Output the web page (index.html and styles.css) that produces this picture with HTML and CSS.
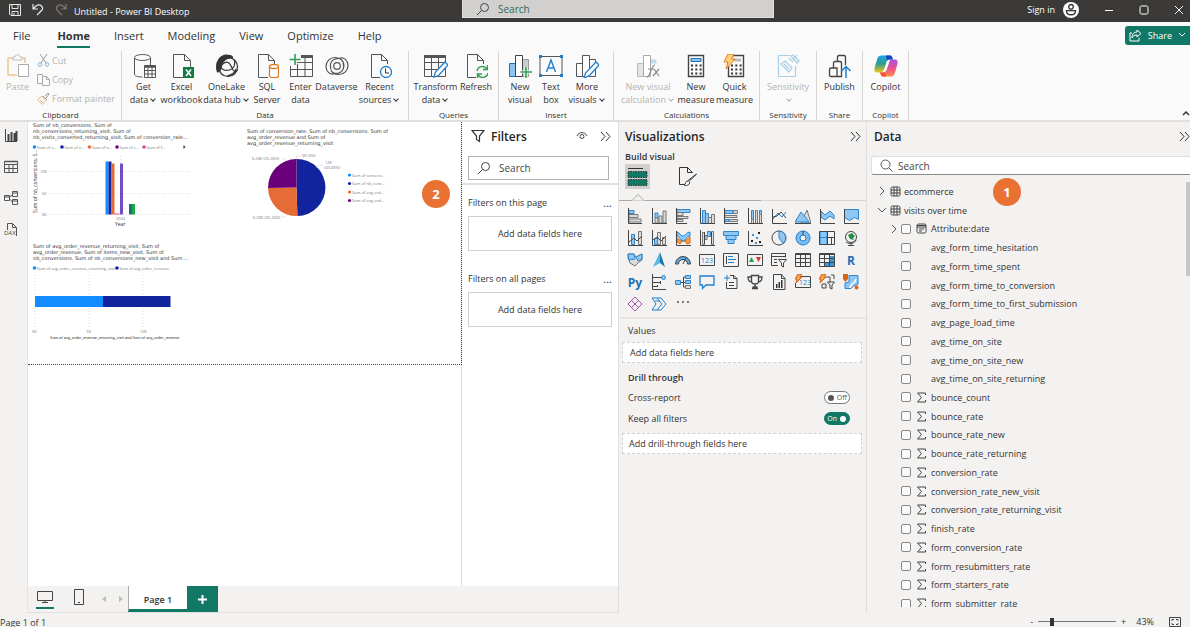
FILE: index.html
```html
<!DOCTYPE html>
<html lang="en">
<head>
    <meta charset="UTF-8">
    <meta name="viewport" content="width=device-width, initial-scale=1.0">
    <title>Untitled - Power BI Desktop</title>
    <link rel="stylesheet" href="styles.css">
</head>
<body>
    <header class="titlebar">
        <div class="titlebar-left">
            <button class="plain" aria-label="Save"><svg width="14" height="14" viewBox="0 0 14 14" fill="none" stroke="#e8e8e8"><path d="M1.5 1.5h11v11h-9.5l-1.5-1.5zM4 1.5v4h6v-4M4 12.500v-4h6v4M6 10v2"/></svg></button>
            <button class="plain" aria-label="Undo"><svg width="14" height="14" viewBox="0 0 14 14" fill="none" stroke="#e8e8e8" stroke-width="1.200"><path d="M2 1v5h5M2 6l3-3c4-3 8 1 6 4l-5 5"/></svg></button>
            <button class="plain" aria-label="Redo"><svg width="14" height="14" viewBox="0 0 14 14" fill="none" stroke="#7c7b7a" stroke-width="1.200"><path d="M12 1v5H7M12 6L9 3C5 0 1 4 3 7l5 5"/></svg></button>
            <span class="doc-name">Untitled - Power BI Desktop</span>
        </div>
        <label class="title-search">
            <svg width="14" height="14" viewBox="0 0 14 14" fill="none" stroke="#3f4a47"><circle cx="8.500" cy="5.500" r="4"/><path d="M5.500 8.500L1 13"/></svg>
            <input type="text" placeholder="Search" aria-label="Search commands">
        </label>
        <div class="titlebar-right">
            <span>Sign in</span>
            <svg width="16" height="16" viewBox="0 0 16 16" fill="none" stroke="#333"><circle cx="8" cy="8" r="8" fill="#fff" stroke="none"/><circle cx="8" cy="4.800" r="2.300" stroke-width="1.300"/><path d="M3.500 8.700h9c0 5.400-9 5.400-9 0z" stroke-width="1.300"/></svg>
            <button class="plain" aria-label="Minimize"><svg width="10" height="10" viewBox="0 0 10 10" stroke="#fff"><path d="M1 5.500h8"/></svg></button>
            <button class="plain" aria-label="Maximize"><svg width="10" height="10" viewBox="0 0 10 10" fill="none" stroke="#fff"><rect x="1" y="1" width="8" height="8" rx="1.500"/></svg></button>
            <button class="plain" aria-label="Close"><svg width="10" height="10" viewBox="0 0 10 10" stroke="#fff"><path d="M1 1l8 8M9 1l-8 8"/></svg></button>
        </div>
    </header>

    <nav class="menu">
        <a href="#">File</a>
        <a href="#" class="active">Home</a>
        <a href="#">Insert</a>
        <a href="#">Modeling</a>
        <a href="#">View</a>
        <a href="#">Optimize</a>
        <a href="#">Help</a>
        <button class="share">
            <svg width="13" height="13" viewBox="0 0 13 13" fill="none" stroke="#fff"><path d="M3 4H1v8h9V9M8 1l4 3.500L8 8V6C5 6 4 7 3 9c0-4 2-6 5-6z"/></svg>
            Share
            <svg width="8" height="6" viewBox="0 0 8 6" fill="none" stroke="#fff"><path d="M1 1l3 3 3-3"/></svg>
        </button>
    </nav>

    <section class="ribbon">
        <div class="group g-clipboard">
            <div class="tools">
                <button class="tool w31 off">
                    <svg viewBox="0 0 24 24" fill="none"><path d="M7 4H2v17h9" stroke="#f0c58e" stroke-width="1.500"/><path d="M16 4h3v5" stroke="#f0c58e" stroke-width="1.500"/><path d="M7 3h2c0-3 5-3 5 0h2v3H7z" stroke="#bbb"/><path d="M12.500 10.500h10v12h-10z" fill="#fff" stroke="#aaa"/></svg>
                    <span>Paste</span>
                </button>
                <div class="stack">
                    <button class="small off"><svg width="13" height="13" viewBox="0 0 13 13" fill="none"><path d="M3 0l6 9M10 0L4 9" stroke="#999"/><circle cx="3" cy="10.500" r="1.800" stroke="#7fb6dd"/><circle cx="10" cy="10.500" r="1.800" stroke="#7fb6dd"/></svg>Cut</button>
                    <button class="small off"><svg width="13" height="13" viewBox="0 0 13 13" fill="none" stroke="#aaa"><path d="M5 10.500H.5v-9h5V3M5.500 3.500h4l3 3v6h-7zM9.500 3.500v3h3"/></svg>Copy</button>
                    <button class="small off"><svg width="13" height="13" viewBox="0 0 13 13" fill="none"><path d="M6 4l4 4M8 4l3-3 1 1-3 4" stroke="#999"/><path d="M5 4L.5 7.500l5 5L9 8.500z" stroke="#e9b98a"/><path d="M3 8l3 3" stroke="#e9b98a"/></svg>Format painter</button>
                </div>
            </div>
            <div class="group-name">Clipboard</div>
        </div>
        <div class="group g-data">
            <div class="tools">
                <button class="tool w31">
                    <svg viewBox="0 0 24 24" fill="none" stroke="#555"><path d="M2.500 4v16c0 2 3 3 8 3M18.500 4v7"/><ellipse cx="10.500" cy="3.500" rx="8" ry="3"/><path d="M12.500 11.500h11v12h-11z" fill="#fff"/><path d="M12.500 12.500h11" stroke-width="2.500"/><path d="M12.500 16.500h11M12.500 20h11M16 12v11M20 12v11"/></svg>
                    <span>Get<br>data<i class="chev"></i></span>
                </button>
                <button class="tool w45">
                    <svg viewBox="0 0 24 24" fill="none" stroke="#555"><path d="M13 23.500H3.500V.5h11l6 6V13M14.500.5v6h6"/><path d="M13 13h11v11H13z" fill="#107c41" stroke="none"/><path d="M16 15.500l5 6.500M21 15.500L16 22" stroke="#fff" stroke-width="1.600"/></svg>
                    <span>Excel<br>workbook</span>
                </button>
                <button class="tool w45">
                    <svg viewBox="0 0 24 24" fill="none" stroke="#333" stroke-width="1.200"><circle cx="13" cy="13" r="9.500"/><path d="M2.500 18C-.5 9 5-1 15 1.500c2 .5 3 1.500 2 2.500-5-1-10 3-10.500 8-.4 3-2 6-4 6z" fill="#333"/><path d="M6.500 11c5-5 8-3 10 2s4 6 6 3M19.500 6c1 5-1 9-5 10-4 1-7 0-9-3M12 22c5-1 8-3 9-7"/></svg>
                    <span>OneLake<br>data hub<i class="chev"></i></span>
                </button>
                <button class="tool w36">
                    <svg viewBox="0 0 24 24" fill="none"><path d="M13 23.500H3.500V.5h10l6 6V10M13.500.5v6h6" stroke="#555"/><path d="M14.500 12.500v9c0 3 9 3 9 0v-9" fill="#fff" stroke="#e07a1f" stroke-width="1.300"/><ellipse cx="19" cy="12.500" rx="4.500" ry="2" fill="#fff" stroke="#e07a1f" stroke-width="1.300"/></svg>
                    <span>SQL<br>Server</span>
                </button>
                <button class="tool w31">
                    <svg viewBox="0 0 24 24" fill="none" stroke="#555"><path d="M12 1.500h11.500v21h-22V12M1.500 15.500h22M8 8.500h15.500M8.500 10v12.500M16 4v18.500"/><path d="M12 2.500h11.500" stroke-width="3"/><path d="M6 0v11M.5 5.500h11" stroke="#2f9e4f" stroke-width="1.600"/></svg>
                    <span>Enter<br>data</span>
                </button>
                <button class="tool w41">
                    <svg viewBox="0 0 24 24" fill="none" stroke="#555" stroke-width="1.200"><circle cx="12" cy="12" r="3.300"/><path d="M10 19.500c-5 2-9-2-9-7 0-5 4-9 9-9 6 0 9 4 9 8 0 5-4 8-8 8-3 0-5-2-5-4M14 4.500c5-2 9 2 9 7 0 5-4 9-9 9-3 0-5-1-6-2M6 15c-2-6 1-10.500 8-10.500M18 9c2 6-1 10.500-8 10.500"/></svg>
                    <span>Dataverse</span>
                </button>
                <button class="tool w45">
                    <svg viewBox="0 0 24 24" fill="none"><path d="M12 23.500H3.500V.5h10l6 6V10M13.500.5v6h6" stroke="#555"/><circle cx="18" cy="18" r="5.500" fill="#fff" stroke="#1f7fd1" stroke-width="1.300"/><path d="M17.500 14.500V19H21" stroke="#333"/></svg>
                    <span>Recent<br>sources<i class="chev"></i></span>
                </button>
            </div>
            <div class="group-name">Data</div>
        </div>
        <div class="group g-queries">
            <div class="tools">
                <button class="tool w45">
                    <svg viewBox="0 0 24 24" fill="none" stroke="#555"><path d="M.5 1.500h21v21H.5zM.5 8.500h21M.5 15.500h21M7.500 4v18M14.500 4v18"/><path d="M.5 2.500h21" stroke-width="3"/><path d="M10 23l1.500-5L21 8l3 3-9.500 10.500z" fill="#fff" stroke="#1f7fd1" stroke-width="1.300"/></svg>
                    <span>Transform<br>data<i class="chev"></i></span>
                </button>
                <button class="tool w36">
                    <svg viewBox="0 0 24 24" fill="none"><path d="M12 23.500H3.500V.5h10l6 6V10M13.500.5v6h6" stroke="#555"/><path d="M13 17c1-5 7-6 10-2M23.500 11v4.500H19M24 19c-1 5-7 6-10 2M13.500 24v-4H18" stroke="#2f9e4f" stroke-width="1.400"/></svg>
                    <span>Refresh</span>
                </button>
            </div>
            <div class="group-name">Queries</div>
        </div>
        <div class="group g-insert">
            <div class="tools">
                <button class="tool w31">
                    <svg viewBox="0 0 24 24" fill="none"><path d="M1.500 9.500h6v13h-6z" fill="#8ec4ee" stroke="#1f6fb5"/><path d="M14.500 5.500h6v17h-6z" fill="#ccc" stroke="#999"/><path d="M7.500 1.500h7v21h-7z" fill="#fff" stroke="#444"/><path d="M18 12v12M12 18h12" stroke="#fafafa" stroke-width="3"/><path d="M18 12.500V24M12.500 18H24" stroke="#2f9e4f" stroke-width="1.600"/></svg>
                    <span>New<br>visual</span>
                </button>
                <button class="tool w31">
                    <svg viewBox="0 0 24 24" fill="none"><path d="M1 2.500h22v19H1z" stroke="#555"/><path d="M7.500 18L12 6l4.500 12M9 14h6" stroke="#1f7fd1" stroke-width="1.400"/><path d="M0 1h3v3H0zM21 1h3v3h-3zM0 20h3v3H0zM21 20h3v3h-3z" fill="#1f7fd1"/></svg>
                    <span>Text<br>box</span>
                </button>
                <button class="tool w41">
                    <svg viewBox="0 0 24 24" fill="none" stroke="#555"><path d="M1.500 9.500h6v13h-6zM14.500 5.500h6v17h-6z"/><path d="M7.500 1.500h7v21h-7z" fill="#fff"/><path d="M9 24l1.500-5L21 8l3 3-9.500 10.500z" fill="#fff" stroke="#1f7fd1" stroke-width="1.300"/></svg>
                    <span>More<br>visuals<i class="chev"></i></span>
                </button>
            </div>
            <div class="group-name">Insert</div>
        </div>
        <div class="group g-calc">
            <div class="tools">
                <button class="tool w60 off">
                    <svg viewBox="0 0 24 24" fill="none"><path d="M1.500 9.500h6v13h-6z" fill="#e4e4e4" stroke="#bbb"/><path d="M14.500 5.500h6v4h-6z" fill="#bcdcf3"/><path d="M7.500 1.500h7v21h-7z" fill="#fff" stroke="#aaa"/><path d="M11 23c3 1 4-12 8-12M12 15h6M18 15l5 7M23 15l-6 7" stroke="#888" stroke-width="1.200"/></svg>
                    <span>New visual<br>calculation<i class="chev"></i></span>
                </button>
                <button class="tool w36">
                    <svg viewBox="0 0 24 24" fill="none"><path d="M4.500 1.500h15v21h-15z" stroke="#444" stroke-width="1.400"/><path d="M7 4.500h10v3H7z" fill="#8ec4ee" stroke="#1f6fb5"/><path d="M7 11.500h11M7 15.500h11M7 19.500h11" stroke="#333" stroke-width="2" stroke-dasharray="2 2.300"/></svg>
                    <span>New<br>measure</span>
                </button>
                <button class="tool w41">
                    <svg viewBox="0 0 24 24" fill="none"><path d="M5.500 1.500h15v21h-15z" stroke="#444" stroke-width="1.400"/><path d="M11 4.500h7v3h-7z" fill="#bbb"/><path d="M8 11.500h11M8 15.500h11M8 19.500h11" stroke="#333" stroke-width="2" stroke-dasharray="2 2.300"/><path d="M5 0h6L8.500 5H12L3 15l2-7H1z" fill="#ffd37a" stroke="#e07a1f"/></svg>
                    <span>Quick<br>measure</span>
                </button>
            </div>
            <div class="group-name">Calculations</div>
        </div>
        <div class="group g-sens">
            <div class="tools">
                <button class="tool w41 off">
                    <svg viewBox="0 0 24 24" fill="none" stroke="#a9cfe8" stroke-width="1.200"><path d="M14 1.500H2.500v21h17V12M5 10l4-3 7 7-3 4zM8 10l5 5M13 4l4 4M15 2l2-1 6 6-2 2zM17 6l4-5"/></svg>
                    <span>Sensitivity<br><i class="chev"></i></span>
                </button>
            </div>
            <div class="group-name">Sensitivity</div>
        </div>
        <div class="group g-one">
            <div class="tools">
                <button class="tool w36">
                    <svg viewBox="0 0 24 24" fill="none" stroke="#444" stroke-width="1.300"><path d="M3 14h6v8.500H3q-1.500 0-1.500-1.500v-5.500Q1.500 14 3 14zM5.500 14V9q0-1.500 1.500-1.500h5q1.500 0 1.500 1.500v13.500H9M9.500 7.500V3q0-1.500 1.500-1.500h5q1.500 0 1.500 1.500v8"/><path d="M18 24V12.500M13.500 17l4.500-4.500 4.500 4.500" stroke="#1f7fd1" stroke-width="1.500"/></svg>
                    <span>Publish</span>
                </button>
            </div>
            <div class="group-name">Share</div>
        </div>
        <div class="group g-one">
            <div class="tools">
                <button class="tool w36">
                    <svg viewBox="0 0 24 24">
                        <defs>
                            <linearGradient id="cpA" x1="0" y1="0" x2="0" y2="1"><stop offset="0" stop-color="#1ba4f0"/><stop offset=".5" stop-color="#2f9e8a"/><stop offset="1" stop-color="#f2c811"/></linearGradient>
                            <linearGradient id="cpB" x1="0" y1="0" x2="0" y2="1"><stop offset="0" stop-color="#a64de8"/><stop offset=".5" stop-color="#e8518f"/><stop offset="1" stop-color="#ff8a4c"/></linearGradient>
                        </defs>
                        <path d="M7 1.500h9c2 0 2 2 3 4h-4c-2 0-2 1-3 4l-2 6c-1 2-2 3-4 3H3c-3 0-3-3-2-6l2-7c1-3 2-4 4-4z" fill="url(#cpA)"/>
                        <path d="M12 1.500h4c2 0 2 2 3 4h-4l-2 1z" fill="#1a3fc4"/>
                        <path d="M17 22.500H9c-2 0-2-2-3-4h3c2 0 3-1 4-4l2-6c1-2 1-3 3-3h3c3 0 3 3 2 6l-2 7c-1 3-2 4-4 4z" fill="url(#cpB)"/>
                        <path d="M12 22.500H9c-2 0-2-2-3-4h5z" fill="#f5532d"/>
                        <path d="M13 8.500h2l-3 8h-2z" fill="#fafafa"/>
                    </svg>
                    <span>Copilot</span>
                </button>
            </div>
            <div class="group-name">Copilot</div>
        </div>
        <button class="plain collapse" aria-label="Collapse ribbon"><svg width="8" height="6" viewBox="0 0 8 6" fill="none" stroke="#333" stroke-width="1.500"><path d="M1 5l3-3 3 3"/></svg></button>
    </section>

    <main class="workspace">
        <nav class="rail">
            <button class="plain" aria-label="Report view"><svg width="14" height="14" viewBox="0 0 14 14" fill="none" stroke="#444"><path d="M1.500 0v12.500H13"/><path d="M4.500 5v7M7.500 3v9M10.500 4v8M12.500 2v10" stroke-width="2"/></svg></button>
            <button class="plain" aria-label="Table view"><svg width="14" height="14" viewBox="0 0 14 14" fill="none" stroke="#555"><path d="M.5 1.500h13v11H.5zM.5 4.500h13M.5 8.500h13M5 4v8.500M9 4v8.500"/><path d="M.5 1.500h13" stroke-width="1.500"/></svg></button>
            <button class="plain" aria-label="Model view"><svg width="14" height="14" viewBox="0 0 14 14" fill="none" stroke="#555"><path d="M.5 4.500h5v5h-5zM.5 6h5M8.500.5h5v5h-5zM8.500 2h5M8.500 8.500h5v5h-5zM8.500 10h5M5.500 6L8.500 4M5.500 8l3 3"/></svg></button>
            <button class="plain" aria-label="DAX query view"><svg width="16" height="16" viewBox="0 0 16 16" fill="none" stroke="#555"><path d="M3.500 8V1.500h5l4 4V14M8.500 1.500v4h4"/><text x="0" y="13" font-size="6" fill="#444" stroke="none">DAX</text></svg></button>
        </nav>

        <div class="center">
            <div class="editor">
                <div class="canvas">
                    <div class="report-page">
                        <div class="visual">
                            <h4>Sum of nb_conversions, Sum of<br>nb_conversions_returning_visit, Sum of<br>nb_visits_converted_returning_visit, Sum of conversion_rate...</h4>
                            <svg width="160" height="88" viewBox="32 142 160 88" class="plot">
                                <circle cx="34.500" cy="147" r="1.800" fill="#118dff"/><text x="37" y="148.500">Sum of e...</text>
                                <circle cx="62" cy="147" r="1.800" fill="#12239e"/><text x="64.500" y="148.500">Sum of n...</text>
                                <circle cx="89.500" cy="147" r="1.800" fill="#e66c37"/><text x="92" y="148.500">Sum of n...</text>
                                <circle cx="117" cy="147" r="1.800" fill="#6b007b"/><text x="119.500" y="148.500">Sum of c...</text>
                                <circle cx="144" cy="147" r="1.800" fill="#e044a7"/><text x="146.500" y="148.500">Sum of f...</text>
                                <path d="M183.500 145l2 2-2 2z" fill="#333"/>
                                <path d="M48 171.500h142M48 193.500h142M48 214.500h142M120.500 156v58" class="gridline"/>
                                <text x="40" y="173">10K</text><text x="42" y="195">5K</text><text x="42" y="216">0K</text>
                                <text transform="translate(37 213) rotate(-90)" class="side">Sum of nb_conversions, S...</text>
                                <path d="M105.500 161.500h3v53h-3z" fill="#118dff"/>
                                <path d="M108.500 161.500h3v53h-3z" fill="#12239e"/>
                                <path d="M111.500 163.500h3v51h-3z" fill="#e66c37"/>
                                <path d="M114.500 213.500h5v1h-5z" fill="#e044a7"/>
                                <path d="M120 163.500h3v51h-3z" fill="#744ec2"/>
                                <path d="M129 204h3v10.500h-3z" fill="#197278"/>
                                <path d="M132 204h3v10.500h-3z" fill="#1aab40"/>
                                <text x="116" y="220">2024</text>
                                <text x="115" y="226" class="side">Year</text>
                            </svg>
                        </div>
                        <div class="visual second">
                            <h4>Sum of conversion_rate, Sum of nb_conversions, Sum of<br>avg_order_revenue and Sum of<br>avg_order_revenue_returning_visit</h4>
                            <svg width="160" height="74" viewBox="246 148 160 74" class="plot">
                                <path d="M296.500 187.500V159a28.500 28.500 0 0 1 .9 57z" fill="#12239e"/>
                                <path d="M296.500 187.500l.9 28.500A28.500 28.500 0 0 1 268 188z" fill="#e66c37"/>
                                <path d="M296.500 187.500l-28.500.5a28.500 28.500 0 0 1 28.500-29z" fill="#6b007b"/>
                                <path d="M296.500 159v-3h4M281 158l4 1 2 2M316 168l3-3h4M281 217h4l2-2" fill="none" stroke="#ccc" stroke-width=".5"/>
                                <text x="252" y="160">6.28K (25.26%)</text><text x="302" y="157">0K (0%)</text>
                                <text x="325" y="164">12K</text><text x="324" y="169">(49.49%)</text><text x="253" y="219">6.28K (25.24%)</text>
                                <circle cx="349.500" cy="175" r="1.600" fill="#118dff"/><text x="352" y="176.500">Sum of conversi...</text>
                                <circle cx="349.500" cy="183.500" r="1.600" fill="#12239e"/><text x="352" y="185">Sum of nb_conv...</text>
                                <circle cx="349.500" cy="192" r="1.600" fill="#e66c37"/><text x="352" y="193.500">Sum of avg_ord...</text>
                                <circle cx="349.500" cy="200.500" r="1.600" fill="#6b007b"/><text x="352" y="202">Sum of avg_ord...</text>
                            </svg>
                        </div>
                        <div class="visual">
                            <h4>Sum of avg_order_revenue_returning_visit, Sum of<br>avg_order_revenue, Sum of items_new_visit, Sum of<br>nb_conversions, Sum of nb_conversions_new_visit and Sum ...</h4>
                            <svg width="160" height="78" viewBox="32 263 160 78" class="plot">
                                <circle cx="34.500" cy="268" r="1.800" fill="#118dff"/><text x="37" y="269.500">Sum of avg_order_revenue_returning_visit</text>
                                <circle cx="117" cy="268" r="1.800" fill="#12239e"/><text x="119.500" y="269.500">Sum of avg_order_revenue</text>
                                <path d="M35 275v54M89 275v54M143 275v54" class="gridline"/>
                                <path d="M35 296h68v11H35z" fill="#118dff"/>
                                <path d="M103 296h67.500v11H103z" fill="#12239e"/>
                                <text x="32" y="333">0K</text><text x="86.500" y="333">5K</text><text x="140" y="333">10K</text>
                                <text x="50" y="339" class="axis">Sum of avg_order_revenue_returning_visit and Sum of avg_order_revenue</text>
                            </svg>
                        </div>
                    </div>
                    <span class="badge badge-two">2</span>
                </div>

                <aside class="filters">
                    <div class="pane-head">
                        <svg width="14" height="14" viewBox="0 0 14 14" fill="none" stroke="#333" stroke-width="1.200"><path d="M1 1.500h12L8.500 7v5.500l-3-2V7z"/></svg>
                        <h2>Filters</h2>
                        <svg width="12" height="10" viewBox="0 0 12 10" fill="none" stroke="#444"><path d="M1 5c2-4.500 8-4.500 10 0"/><circle cx="6" cy="5.500" r="2"/></svg>
                        <button class="plain" aria-label="Collapse filters"><svg width="11" height="11" viewBox="0 0 11 11" fill="none" stroke="#333"><path d="M1 1l4 4.500L1 10M6 1l4 4.500L6 10"/></svg></button>
                    </div>
                    <label class="filter-search">
                        <svg width="14" height="14" viewBox="0 0 14 14" fill="none" stroke="#444"><circle cx="8.500" cy="5.500" r="4"/><path d="M5.500 8.500L1 13"/></svg>
                        <input type="text" placeholder="Search" aria-label="Search filters">
                    </label>
                    <div class="filter-section">
                        <div class="filter-label"><span>Filters on this page</span><button class="plain dots" aria-label="More options">...</button></div>
                        <div class="drop-box">Add data fields here</div>
                    </div>
                    <div class="filter-section">
                        <div class="filter-label"><span>Filters on all pages</span><button class="plain dots" aria-label="More options">...</button></div>
                        <div class="drop-box">Add data fields here</div>
                    </div>
                </aside>
            </div>

            <div class="page-tabs">
                <button class="plain layout active" aria-label="Desktop layout"><svg width="16" height="14" viewBox="0 0 16 14" fill="none" stroke="#444"><path d="M.5 1.500h15v9H.5zM5 12.500h6M8 10v3"/></svg></button>
                <button class="plain layout" aria-label="Mobile layout"><svg width="12" height="16" viewBox="0 0 12 16" fill="none" stroke="#444"><path d="M1.500.5h9v15h-9zM5 13.500h2"/></svg></button>
                <button class="plain arrow" aria-label="Previous page"><svg width="6" height="6" viewBox="0 0 6 6"><path d="M5 0v6L1 3z" fill="#bbb"/></svg></button>
                <button class="plain arrow" aria-label="Next page"><svg width="6" height="6" viewBox="0 0 6 6"><path d="M1 0v6l4-3z" fill="#bbb"/></svg></button>
                <button class="page-tab">Page 1</button>
                <button class="add-page" aria-label="New page"><svg width="9" height="9" viewBox="0 0 9 9" stroke="#fff" stroke-width="2"><path d="M4.500 0v9M0 4.500h9"/></svg></button>
            </div>
        </div>

        <aside class="viz">
            <div class="pane-head">
                <h2>Visualizations</h2>
                <button class="plain" aria-label="Collapse visualizations"><svg width="11" height="11" viewBox="0 0 11 11" fill="none" stroke="#333"><path d="M1 1l4 4.500L1 10M6 1l4 4.500L6 10"/></svg></button>
            </div>
            <h3>Build visual</h3>
            <div class="build-tabs">
                <button class="selected" aria-label="Build visual"><svg width="21" height="21" viewBox="0 0 21 21"><path d="M1 2.500h15" stroke="#333"/><path d="M1 5.500h19v6H1zM1 13.500h19v6H1z" fill="#117865" stroke="#333" stroke-dasharray="1.500 1"/></svg></button>
                <button aria-label="Format visual"><svg width="21" height="21" viewBox="0 0 21 21" fill="none" stroke="#333"><path d="M8 18.500H2.500v-17h8l5 5M10.500 1.500v5h5"/><path d="M19.500 8L12 15.500l-1-1L19.500 8zM11 15c-3 0-2 3-4 4 3 1 6 0 5.500-3" fill="#fff"/></svg></button>
            </div>
            <div class="tab-line"><svg width="142" height="8" viewBox="0 0 142 8" fill="none" stroke="#aaa"><path d="M0 6.500h13l6-6 6 6h117"/></svg></div>

            <div class="viz-grid">
                <button aria-label="Stacked bar chart"><svg viewBox="0 0 16 16"><path class="b" d="M2 2.500h5v3H2z"/><path class="g" d="M2 6.500h9v3H2zM2 11h12v3H2z"/><path class="k" d="M1.500 0v15.500H15"/></svg></button>
                <button aria-label="Stacked column chart"><svg viewBox="0 0 16 16"><path class="b" d="M4 5h3v5H4z"/><path class="g" d="M4 10h3v5H4zM8 8h3v7H8zM12 3h3v12h-3z"/><path class="k" d="M1.500 0v15.500H16"/></svg></button>
                <button aria-label="Clustered bar chart"><svg viewBox="0 0 16 16"><path class="b" d="M2 1.500h13v3H2z"/><path class="g" d="M2 4.500h6v3H2zM2 8.500h11v2H2zM2 11.500h6v2H2z"/><path class="k" d="M1.500 0v15.500H12"/></svg></button>
                <button aria-label="Clustered column chart"><svg viewBox="0 0 16 16"><path class="b" d="M3.500 2.500h3v13h-3zM6.500 5.500h3v10h-3z"/><path class="g" d="M9.500 9.500h3v6h-3zM12.500 6.500h3v9h-3z"/><path class="k" d="M1.500 0v15.500H16"/></svg></button>
                <button aria-label="100% stacked bar chart"><svg viewBox="0 0 16 16"><path class="b" d="M2 2.500h8v3H2zM2 11.500h4v2H2z"/><path class="g" d="M10.500 2.500h4v3h-4zM2 7.500h12v2H2zM6.500 11.500h8v2h-8z"/><path class="k" d="M1.500 0v15.500H15"/></svg></button>
                <button aria-label="100% stacked column chart"><svg viewBox="0 0 16 16"><path class="b" d="M4.500 2.500h2v9h-2zM12.500 2.500h2v4h-2z"/><path class="g" d="M4.500 11.500h2v4h-2zM8.500 2.500h2v13h-2zM12.500 6.500h2v9h-2z"/><path class="k" d="M1.500 0v15.500H16"/></svg></button>
                <button aria-label="Line chart"><svg viewBox="0 0 16 16"><path class="bl" d="M2 11l5-6 4 4 4-5"/><path class="k" d="M1.500 1v14.500H16M2 9l4-1 4-4 5 6"/></svg></button>
                <button aria-label="Area chart"><svg viewBox="0 0 16 16"><path class="g" d="M6 15l6-13 4 13z"/><path class="b" d="M0 14L6 4l5 6 3 4z"/><path class="k" d="M0 15.500h16"/></svg></button>
                <button aria-label="Stacked area chart"><svg viewBox="0 0 16 16"><path class="b" d="M2 3l4 4 5-4 4 4v4l-4-3-5 4-4-3z"/><path class="k" d="M1.500 1v14.500H16"/></svg></button>
                <button aria-label="100% stacked area chart"><svg viewBox="0 0 16 16"><path class="b" d="M1.500 1.500h14v10l-4-2-5 3-5-3z"/><path class="k" d="M1.500 1v14.500H16"/></svg></button>

                <button aria-label="Line and stacked column chart"><svg viewBox="0 0 16 16"><path class="b" d="M4.500 4.500h3v10h-3z"/><path class="g" d="M11.500 1.500h3v13h-3z"/><path class="k" d="M1.500 0v15.500H16M2 12l5-4 3 3 5-5"/></svg></button>
                <button aria-label="Line and clustered column chart"><svg viewBox="0 0 16 16"><path class="b" d="M3.500 8.500h3v6h-3z"/><path class="g" d="M6.500 2.500h3v12h-3zM11.500 7.500h3v7h-3z"/><path class="k" d="M1.500 0v15.500H16M2 10l4-3 4 4 5-5"/></svg></button>
                <button aria-label="Ribbon chart"><svg viewBox="0 0 16 16"><path class="o" d="M2 8l4 3h4l5-4v6l-3 1-2-3H7l-2 3-3-2z"/><path class="b" d="M2 2c3 0 3 4 6 4s3-4 7-4v4c-4 0-4 5-7 5s-3-5-6-5z"/><path class="k" d="M1.500 1v14.500H16"/></svg></button>
                <button aria-label="Waterfall chart"><svg viewBox="0 0 16 16"><path class="b" d="M8.500 1.500h3v5h-3z"/><path class="g" d="M3.500 2.500h2v12h-2zM12.500 1.500h2v13h-2zM6 5.500h2v4H6z"/><path class="k" d="M1.500 0v15.500H16M5.500 2v12M12.500 2v12"/></svg></button>
                <button aria-label="Funnel chart"><svg viewBox="0 0 16 16"><path class="b" d="M.5 1.500h15v4H.5zM3 5.500h10v4H3zM5 9.500h6v4H5z"/></svg></button>
                <button aria-label="Scatter chart"><svg viewBox="0 0 16 16"><path class="k" d="M1.500 1v14.500H16"/><path d="M4 10h2v2H4zM11 2h2v2h-2zM12 11h2v2h-2z" fill="#222"/><path d="M5 4h2v2H5zM9 7h2v2H9zM8 12h2v2H8z" fill="#3a96dd"/></svg></button>
                <button aria-label="Pie chart"><svg viewBox="0 0 16 16"><circle cx="8" cy="8" r="7" class="k"/><path class="b" d="M8 1a7 7 0 0 1 4 12.500L8 8z"/></svg></button>
                <button aria-label="Donut chart"><svg viewBox="0 0 16 16"><circle cx="8" cy="8" r="5" fill="none" stroke="#7dbcf0" stroke-width="4"/><circle cx="8" cy="8" r="7" class="bl"/><circle cx="8" cy="8" r="3" class="bl"/><path class="k" d="M8 1v4"/></svg></button>
                <button aria-label="Treemap"><svg viewBox="0 0 16 16"><path class="b" d="M1 1.500h7v6H1zM1 7.500h7v7H1z"/><path class="k" d="M.5 1.500h15v13H.5zM8.500 1.500v13M8.500 7.500h7M12.500 7.500v7"/></svg></button>
                <button aria-label="Map"><svg viewBox="0 0 16 16"><circle cx="8" cy="7" r="5.500" class="k"/><path d="M5 5l4-2 3 3-2 2 1 2-4-1z" fill="#2a8c4a"/><path class="k" d="M3 12c4 3 9 1 10-2M8 13v2M5 15.500h6"/></svg></button>

                <button aria-label="Filled map"><svg viewBox="0 0 16 16"><path class="g" d="M1 2h6l2 3 6-3v6l-3 2-4 4-5-3-2-5z"/><path class="b" d="M1 2h6l1 5-6 1zM9 5l6-3v5l-4 2z"/></svg></button>
                <button aria-label="Azure map"><svg viewBox="0 0 16 16"><path d="M9 0L2 15l7-4z" fill="#5db5e0"/><path d="M9 0l5 15-5-4z" fill="#1a76ae"/></svg></button>
                <button aria-label="Gauge"><svg viewBox="0 0 16 16"><path d="M2 12a6 6 0 0 1 12 0" fill="none" stroke="#5aa9e6" stroke-width="3"/><path class="k" d="M.5 12a7.500 7.500 0 0 1 15 0h-3a4.500 4.500 0 0 0-9 0zM8 12l3-6"/></svg></button>
                <button aria-label="Card"><svg viewBox="0 0 16 16"><path class="k" d="M.5 2.500h15v11H.5z"/><text x="2" y="10.500" font-size="7" fill="#1f7fd1">123</text></svg></button>
                <button aria-label="Multi-row card"><svg viewBox="0 0 16 16"><path class="k" d="M.5 1.500h15v13H.5zM3.500 4v8"/><path class="bl" d="M5 4.500h5M5 7.500h8M5 10.500h6"/></svg></button>
                <button aria-label="KPI"><svg viewBox="0 0 16 16"><path class="k" d="M.5 2.500h15v11H.5z"/><path d="M2 10l2.500-5L7 10z" fill="#2a9d4a"/><path d="M9 5h5l-2.500 5z" fill="#d13438"/></svg></button>
                <button aria-label="Slicer"><svg viewBox="0 0 16 16"><path class="k" d="M7 13.500H.5v-12h14v4M.5 4.500h14M3 7.500h3M3 10.500h3"/><path class="k" d="M7.500 7.500h8l-3 3.500v4l-2-1v-3z"/></svg></button>
                <button aria-label="Table"><svg viewBox="0 0 16 16"><path class="k" d="M.5 1.500h15v13H.5zM.5 2.500h15M.5 6.500h15M.5 10.500h15M5.500 3v11M10.500 3v11"/></svg></button>
                <button aria-label="Matrix"><svg viewBox="0 0 16 16"><path d="M10 4h5v10h-9v-4h4z" fill="#3a96dd"/><path class="k" d="M.5 1.500h15v13H.5zM.5 2.500h15M.5 6.500h15M.5 10.500h15M5.500 3v11M10.500 3v11"/></svg></button>
                <button aria-label="R script visual"><span class="lang">R</span></button>

                <button aria-label="Python visual"><span class="lang">Py</span></button>
                <button aria-label="Key influencers"><svg viewBox="0 0 16 16"><path class="k" d="M1.500 0v15.500H15M2 3.500h9M2 8.500h7M2 12.500h4M9.500 7v3M6.500 11v2"/><circle cx="12.500" cy="3.500" r="2" class="b"/></svg></button>
                <button aria-label="Decomposition tree"><svg viewBox="0 0 16 16"><path class="k" d="M5 8.500h6M8.500 3v10h3M8.500 3h3"/><path class="b" d="M.5 6.500h5v4h-5zM10.500 1.500h5v3h-5zM10.500 6.500h5v3h-5z"/><path class="g" d="M10.500 11.500h5v3h-5z"/></svg></button>
                <button aria-label="Q&amp;A"><svg viewBox="0 0 16 16"><path class="bl" d="M1 2h14v9H7l-3.500 3.500V11H1z" stroke-width="1.300"/></svg></button>
                <button aria-label="Narrative"><svg viewBox="0 0 16 16"><path class="k" d="M7 1.500h4l3 3v10H3.500V8M10.500 1.500v3H14M6 8.500h5M6 11.500h5"/><path class="bl" d="M4 1v6M1 4h6"/></svg></button>
                <button aria-label="Goals"><svg viewBox="0 0 16 16"><path class="k" d="M4.500 1.500h7V7c0 4-7 4-7 0zM4.500 3H1c0 4 2 5 4 5M11.500 3H15c0 4-2 5-4 5M8 10v3M5 14.500h6M5.500 13h5" stroke-width="1.300"/></svg></button>
                <button aria-label="Paginated report"><svg viewBox="0 0 16 16"><path class="k" d="M2.500.5h8l3.500 4v11H2.500zM10.500.5v4h3.500"/><path d="M5 10h1.500v4H5zM7.500 8H9v6H7.500zM10 6h1.500v8H10z" fill="#333"/></svg></button>
                <button aria-label="New card"><svg viewBox="0 0 16 16"><path class="k" d="M6 2.500h9.500v11H.5V9"/><text x="4" y="11" font-size="7" fill="#1f7fd1">123</text><path class="o" d="M3 0h4L5 3h2L1 9l1-4H0z"/></svg></button>
                <button aria-label="New slicer"><svg viewBox="0 0 16 16"><path class="k" d="M7 3h4v5M12 1h3v4M3 10h4v4H3zM8.500 8h7l-2.500 3v4l-2-1v-3z"/><path class="o" d="M3 0h4L5 3h2L1 9l1-4H0z"/></svg></button>
                <button aria-label="ArcGIS map"><svg viewBox="0 0 16 16"><path class="b" d="M6 1.500h9v9l-4 1-3 3H2V9l4-1z"/><path d="M7 14c0-5 5-3 6-9" fill="none" stroke="#fff" stroke-width="1.500"/><path d="M0 0h5v5L2.500 8 0 5z" fill="#d9660f"/><circle cx="13.500" cy="13.500" r="2" fill="#d9660f"/></svg></button>

                <button aria-label="Power Apps"><svg viewBox="0 0 16 16" fill="none" stroke="#9b4db0"><path d="M8 1l7 7-7 7-7-7zM4.500 4.500l7 7M11.500 4.500l-7 7"/></svg></button>
                <button aria-label="Power Automate"><svg viewBox="0 0 16 16" fill="none" stroke="#1f7fd1"><path d="M1 2h9l5 6-5 6H1l4-6zM6 2l5 6-5 6M4 5h5"/></svg></button>
                <button aria-label="Get more visuals"><svg viewBox="0 0 16 16" fill="#444"><circle cx="3" cy="6" r=".9"/><circle cx="8" cy="6" r=".9"/><circle cx="13" cy="6" r=".9"/></svg></button>
            </div>

            <div class="wells">
                <div class="well-name">Values</div>
                <div class="well">Add data fields here</div>
                <div class="well-name strong">Drill through</div>
                <label class="switch-row">Cross-report<input type="checkbox" class="switch"><span class="switch-text">Off</span></label>
                <label class="switch-row">Keep all filters<input type="checkbox" class="switch" checked><span class="switch-text">On</span></label>
                <div class="well">Add drill-through fields here</div>
            </div>
        </aside>

        <aside class="data">
            <div class="pane-head">
                <h2>Data</h2>
                <button class="plain" aria-label="Collapse data"><svg width="11" height="11" viewBox="0 0 11 11" fill="none" stroke="#333"><path d="M1 1l4 4.500L1 10M6 1l4 4.500L6 10"/></svg></button>
            </div>
            <label class="data-search">
                <svg width="13" height="13" viewBox="0 0 13 13" fill="none" stroke="#555"><circle cx="5.500" cy="5.500" r="4.500"/><path d="M9 9l3.500 3.500"/></svg>
                <input type="text" placeholder="Search" aria-label="Search data">
            </label>
            <span class="badge badge-one">1</span>
            <div class="tree-wrap">
                <div class="tree">
                    <div class="table-row"><svg class="caret" viewBox="0 0 10 10"><path d="M3 1l4 4-4 4"/></svg><svg class="tbl" viewBox="0 0 11 11"><rect x="1" y="1" width="9" height="9" rx="1.500"/><path d="M1 4h9M1 7h9M4 1v9M7 1v9"/></svg>ecommerce</div>
                    <div class="table-row"><svg class="caret" viewBox="0 0 10 10"><path d="M1 3l4 4 4-4"/></svg><svg class="tbl" viewBox="0 0 11 11"><rect x="1" y="1" width="9" height="9" rx="1.500"/><path d="M1 4h9M1 7h9M4 1v9M7 1v9"/></svg>visits over time</div>
                    <label class="field"><svg class="caret" viewBox="0 0 10 10"><path d="M3 1l4 4-4 4"/></svg><input type="checkbox"><svg class="kind" viewBox="0 0 11 11"><rect x="1" y="1" width="9" height="9" rx="1.500"/><path d="M1 2.500h9M1 4h9M3 6h5M3 8h3"/></svg>Attribute:date</label>
                    <label class="field"><input type="checkbox"><span class="kind"></span>avg_form_time_hesitation</label>
                    <label class="field"><input type="checkbox"><span class="kind"></span>avg_form_time_spent</label>
                    <label class="field"><input type="checkbox"><span class="kind"></span>avg_form_time_to_conversion</label>
                    <label class="field"><input type="checkbox"><span class="kind"></span>avg_form_time_to_first_submission</label>
                    <label class="field"><input type="checkbox"><span class="kind"></span>avg_page_load_time</label>
                    <label class="field"><input type="checkbox"><span class="kind"></span>avg_time_on_site</label>
                    <label class="field"><input type="checkbox"><span class="kind"></span>avg_time_on_site_new</label>
                    <label class="field"><input type="checkbox"><span class="kind"></span>avg_time_on_site_returning</label>
                    <label class="field"><input type="checkbox"><svg class="kind" viewBox="0 0 11 11"><path d="M9.500 3V1h-8l4 4.500-4 4.500h8V8"/></svg>bounce_count</label>
                    <label class="field"><input type="checkbox"><svg class="kind" viewBox="0 0 11 11"><path d="M9.500 3V1h-8l4 4.500-4 4.500h8V8"/></svg>bounce_rate</label>
                    <label class="field"><input type="checkbox"><svg class="kind" viewBox="0 0 11 11"><path d="M9.500 3V1h-8l4 4.500-4 4.500h8V8"/></svg>bounce_rate_new</label>
                    <label class="field"><input type="checkbox"><svg class="kind" viewBox="0 0 11 11"><path d="M9.500 3V1h-8l4 4.500-4 4.500h8V8"/></svg>bounce_rate_returning</label>
                    <label class="field"><input type="checkbox"><svg class="kind" viewBox="0 0 11 11"><path d="M9.500 3V1h-8l4 4.500-4 4.500h8V8"/></svg>conversion_rate</label>
                    <label class="field"><input type="checkbox"><svg class="kind" viewBox="0 0 11 11"><path d="M9.500 3V1h-8l4 4.500-4 4.500h8V8"/></svg>conversion_rate_new_visit</label>
                    <label class="field"><input type="checkbox"><svg class="kind" viewBox="0 0 11 11"><path d="M9.500 3V1h-8l4 4.500-4 4.500h8V8"/></svg>conversion_rate_returning_visit</label>
                    <label class="field"><input type="checkbox"><svg class="kind" viewBox="0 0 11 11"><path d="M9.500 3V1h-8l4 4.500-4 4.500h8V8"/></svg>finish_rate</label>
                    <label class="field"><input type="checkbox"><svg class="kind" viewBox="0 0 11 11"><path d="M9.500 3V1h-8l4 4.500-4 4.500h8V8"/></svg>form_conversion_rate</label>
                    <label class="field"><input type="checkbox"><svg class="kind" viewBox="0 0 11 11"><path d="M9.500 3V1h-8l4 4.500-4 4.500h8V8"/></svg>form_resubmitters_rate</label>
                    <label class="field"><input type="checkbox"><svg class="kind" viewBox="0 0 11 11"><path d="M9.500 3V1h-8l4 4.500-4 4.500h8V8"/></svg>form_starters_rate</label>
                    <label class="field"><input type="checkbox"><svg class="kind" viewBox="0 0 11 11"><path d="M9.500 3V1h-8l4 4.500-4 4.500h8V8"/></svg>form_submitter_rate</label>
                </div>
                <div class="scroll-thumb"></div>
            </div>
        </aside>
    </main>

    <footer class="status">
        <span>Page 1 of 1</span>
        <div class="zoom">
            <button class="plain" aria-label="Zoom out">-</button>
            <input type="range" min="0" max="100" value="16" aria-label="Zoom">
            <button class="plain" aria-label="Zoom in">+</button>
            <span>43%</span>
            <button class="plain" aria-label="Fit to page"><svg width="12" height="10" viewBox="0 0 12 10" fill="none" stroke="#444"><path d="M.5.5h11v9H.5zM3 4V2.500h2M9 4V2.500H7M3 6v1.500h2M9 6v1.500H7"/></svg></button>
        </div>
    </footer>
</body>
</html>
```

FILE: styles.css
```css
* {
    box-sizing: border-box;
}
body {
    margin: 0;
    height: 100vh;
    display: flex;
    flex-direction: column;
    overflow: hidden;
    font-family: "Open Sans", "Noto Sans", sans-serif;
    font-size: 9px;
    color: #333;
    background: #f3f2f1;
}
button, input {
    font-family: inherit;
    font-size: inherit;
    color: inherit;
}
button {
    padding: 0;
    border: none;
    background: none;
    cursor: pointer;
}
input[type="text"] {
    min-width: 0;
    flex: 1;
    padding: 0;
    border: none;
    outline: none;
    background: none;
    font-size: 10px;
}
input::placeholder {
    color: #444;
    opacity: 1;
}
svg {
    display: block;
    flex: none;
}
h2, h3, h4 {
    margin: 0;
}
.plain {
    display: flex;
    align-items: center;
    justify-content: center;
}

/* title bar */
.titlebar {
    display: grid;
    grid-template-columns: 462fr 312fr 416fr;
    height: 22px;
    flex: none;
    background: #3b3a39;
    color: #fff;
}
.titlebar-left {
    display: flex;
    align-items: center;
    gap: 9px;
    padding: 0 0 3px 8px;
}
.doc-name {
    padding-top: 3px;
    margin-left: -3px;
}
.title-search {
    display: flex;
    align-items: center;
    gap: 8px;
    height: 18px;
    padding-left: 13px;
    background: #d2d0ce;
    border: 1px solid #e1dfdd;
    border-top: none;
}
.title-search input::placeholder {
    color: #2f6b5d;
}
.titlebar-right {
    display: flex;
    align-items: center;
    justify-content: flex-end;
    gap: 25px;
    padding: 0 6px 3px 0;
}
.titlebar-right span {
    margin-right: -17px;
}

/* menu tabs */
.menu {
    display: flex;
    align-items: center;
    gap: 24px;
    height: 26px;
    flex: none;
    padding-left: 13px;
    background: #fafafa;
}
.menu a {
    padding: 5px 0 2px;
    line-height: 16px;
    border-bottom: 2px solid transparent;
    color: #333;
    font-size: 11px;
    text-decoration: none;
}
.menu .active {
    margin-left: 3px;
    border-color: #117865;
    font-weight: 700;
}
.share {
    display: flex;
    align-items: center;
    gap: 6px;
    height: 19px;
    margin-left: auto;
    padding: 0 4px;
    border-radius: 3px 0 0 3px;
    background: #117865;
    color: #fff;
}

/* ribbon */
.ribbon {
    display: flex;
    height: 74px;
    flex: none;
    padding-top: 3px;
    background: #fafafa;
    border-bottom: 2px solid #e1dfdd;
}
.group {
    display: flex;
    flex-direction: column;
    justify-content: space-between;
    flex: none;
    border-right: 1px solid #d8d6d4;
}
.g-clipboard { width: 122px; }
.g-data { width: 287px; }
.g-queries { width: 90px; }
.g-insert { width: 115px; }
.g-calc { width: 146px; }
.g-sens { width: 57px; }
.g-one { width: 46px; }
.tools {
    display: flex;
    justify-content: center;
}
.g-clipboard .tools {
    justify-content: flex-start;
    padding-left: 2px;
}
.g-data .tools {
    justify-content: flex-start;
    padding-left: 6px;
}
.tool {
    display: flex;
    flex-direction: column;
    align-items: center;
    gap: 2px;
    padding-top: 3px;
    line-height: 13px;
    white-space: nowrap;
}
.tool span {
    display: block;
    text-align: center;
}
.tool svg {
    width: 24px;
    height: 24px;
}
.w31 { width: 31px; }
.w36 { width: 36px; }
.w41 { width: 41px; }
.w45 { width: 45px; }
.w60 { width: 60px; }
.off {
    color: #b5b3b1;
}
.chev {
    display: inline-block;
    width: 4px;
    height: 4px;
    margin: 0 2px 2px 3px;
    border: solid currentColor;
    border-width: 0 1px 1px 0;
    transform: rotate(45deg);
}
.stack {
    display: flex;
    flex-direction: column;
    gap: 1px;
}
.small {
    display: flex;
    align-items: center;
    gap: 2px;
    height: 18px;
    padding-left: 4px;
    white-space: nowrap;
}
.group-name {
    font-size: 8px;
    line-height: 10px;
    text-align: center;
}
.collapse {
    margin: auto 0 4px auto;
}

/* workspace */
.workspace {
    display: flex;
    flex: 1;
    min-height: 0;
}
.rail {
    display: flex;
    flex-direction: column;
    gap: 17px;
    width: 28px;
    padding: 7px 0 0 4px;
    align-items: flex-start;
    border-right: 1px solid #e6e4e2;
}
.center {
    display: flex;
    flex: 1;
    min-width: 0;
    flex-direction: column;
}
.editor {
    display: flex;
    flex: 1;
    min-height: 0;
    background: #fff;
}
.canvas {
    position: relative;
    flex: 1;
    border-right: 1px solid #e1dfdd;
}
.report-page {
    display: grid;
    grid-template-columns: 214px 1fr;
    grid-template-rows: 121px 121px;
    padding-left: 4px;
    margin-right: -1px;
    border: 0 dotted #444;
    border-width: 0 1px 1px 0;
}
.visual h4 {
    padding: 0 1px 2px;
    font-family: "DejaVu Sans", sans-serif;
    font-size: 5px;
    font-weight: 400;
    line-height: 6px;
    white-space: nowrap;
}
.second {
    padding-top: 6px;
}
.plot text {
    font-size: 4px;
    fill: #777;
}
.plot .axis {
    font-family: Roboto, sans-serif;
    fill: #333;
}
.plot .side {
    font-size: 5px;
    fill: #333;
}
.plot .gridline {
    fill: none;
    stroke: #ddd;
    stroke-width: 1px;
    stroke-dasharray: 1 2;
}
.badge {
    position: absolute;
    width: 28px;
    height: 28px;
    border-radius: 50%;
    background: #e97132;
    color: #fff;
    font-size: 13px;
    font-weight: 700;
    line-height: 28px;
    text-align: center;
}
.badge-two {
    top: 58px;
    right: 11px;
}
.badge-one {
    top: 56px;
    left: 126px;
}

/* panes */
.pane-head {
    display: flex;
    align-items: center;
    gap: 6px;
    height: 28px;
}
.pane-head h2 {
    flex: 1;
    font-size: 12px;
    font-weight: 600;
    color: #252423;
}
.filters {
    width: 156px;
    flex: none;
}
.filters .pane-head {
    gap: 6px;
    padding: 0 7px 0 9px;
}
.filters .pane-head .plain {
    margin-left: 6px;
}
.filter-search {
    display: flex;
    align-items: center;
    gap: 8px;
    height: 24px;
    margin: 6px 9px 3px 6px;
    padding-left: 8px;
    border: 1px solid #b3b0ad;
}
.filter-search + .filter-section {
    border-top: 2px solid #e1dfdd;
    padding-top: 11px;
}
.filter-section {
    padding: 21px 6px 0;
}
.filter-label {
    display: flex;
    justify-content: space-between;
    height: 20px;
    line-height: 14px;
}
.dots {
    align-items: flex-start;
    font-size: 11px;
    line-height: 14px;
}
.drop-box {
    height: 35px;
    border: 1px solid #d2d0ce;
    line-height: 34px;
    text-align: center;
}

/* page tabs */
.page-tabs {
    display: flex;
    height: 27px;
    flex: none;
    padding-left: 8px;
    border-bottom: 1px solid #e1dfdd;
}
.layout {
    width: 18px;
    height: 23px;
    margin-right: 7px;
    border-bottom: 2px solid transparent;
}
.layout.active {
    margin-right: 16px;
    border-color: #117865;
}
.arrow {
    width: 17px;
    height: 26px;
}
.page-tab {
    width: 59px;
    margin-left: -1px;
    padding-top: 3px;
    background: #fff;
    border-left: 1px solid #aaa;
    border-bottom: 3px solid #117865;
    font-weight: 600;
}
.add-page {
    display: flex;
    align-items: center;
    justify-content: center;
    width: 31px;
    background: #117865;
}

/* visualizations pane */
.viz {
    width: 249px;
    flex: none;
    border: solid #e1dfdd;
    border-width: 0 1px;
}
.viz .pane-head {
    padding: 0 5px 0 6px;
}
.viz h3 {
    padding-left: 6px;
    font-size: 9px;
    font-weight: 600;
    line-height: 14px;
}
.build-tabs {
    display: flex;
    gap: 25px;
    padding: 0 6px;
}
.build-tabs button {
    padding: 2px;
}
.build-tabs .selected {
    background: #d2d0ce;
}
.tab-line {
    padding-top: 5px;
    margin-bottom: 4px;
    border-bottom: 1px solid #d8d6d4;
}
.tab-line svg {
    margin-bottom: -2px;
}
.viz-grid {
    display: grid;
    grid-template-columns: repeat(10, 24px);
    grid-auto-rows: 22px;
    padding: 0 0 2px 4px;
    border-bottom: 2px solid #e8e6e4;
}
.viz-grid button {
    display: flex;
    align-items: center;
    justify-content: center;
}
.viz-grid svg {
    width: 16px;
    height: 16px;
}
.viz-grid .k {
    fill: none;
    stroke: #444;
}
.viz-grid .b {
    fill: #8fc7f4;
    stroke: #2f86cc;
}
.viz-grid .g {
    fill: #dcdcdc;
    stroke: #777;
}
.viz-grid .bl {
    fill: none;
    stroke: #1f7fd1;
}
.viz-grid .o {
    fill: #f5a04a;
    stroke: #d9660f;
}
.lang {
    color: #1f6fb5;
    font-size: 12px;
    font-weight: 700;
}
.wells {
    padding: 3px 4px 0 3px;
}
.well-name {
    padding-left: 6px;
    line-height: 18px;
}
.strong {
    font-weight: 600;
}
.well {
    height: 21px;
    padding-left: 7px;
    margin: 2px 0 6px;
    border: 1px dashed #d2d0ce;
    background: #fff;
    line-height: 19px;
}
.switch-row + .well {
    margin-top: 4px;
    padding-left: 6px;
}
.switch-row {
    position: relative;
    display: flex;
    align-items: center;
    justify-content: space-between;
    height: 21px;
    padding: 0 12px 0 6px;
}
.switch {
    appearance: none;
    display: flex;
    align-items: center;
    width: 26px;
    height: 13px;
    margin: 0;
    padding: 0 3px;
    border: 1px solid #777;
    border-radius: 7px;
    background: #fff;
}
.switch::before {
    content: "";
    width: 6px;
    height: 6px;
    border-radius: 50%;
    background: #555;
}
.switch:checked {
    justify-content: flex-end;
    border-color: #117865;
    background: #117865;
}
.switch:checked::before {
    background: #fff;
}
.switch-text {
    position: absolute;
    right: 15px;
    font-size: 7px;
    color: #555;
}
.switch:checked + .switch-text {
    right: 25px;
    color: #fff;
}

/* data pane */
.data {
    position: relative;
    display: flex;
    flex-direction: column;
    width: 323px;
    flex: none;
}
.data .pane-head {
    padding: 0 0 0 7px;
}
.data-search {
    display: flex;
    align-items: center;
    gap: 5px;
    height: 19px;
    margin: 6px 0 7px 4px;
    padding-left: 8px;
    border: 1px solid #e1dfdd;
    border-right: none;
    border-bottom-color: #8a8886;
    border-radius: 3px 0 0 3px;
    background: #fff;
}
.tree-wrap {
    display: flex;
    flex: 1;
    min-height: 0;
    margin-bottom: 6px;
    overflow: hidden;
}
.tree {
    display: grid;
    flex: 1;
    grid-auto-rows: 1fr;
    height: calc(100% + 6px);
}
.table-row, .field {
    display: flex;
    align-items: center;
    min-height: 0;
}
.table-row {
    padding-left: 10px;
}
.field {
    justify-content: flex-start;
    padding-left: 34px;
}
.field .caret {
    margin-left: -12px;
    margin-right: 2px;
}
.caret {
    width: 10px;
    height: 10px;
    fill: none;
    stroke: #555;
}
.tbl, .kind {
    width: 11px;
    height: 11px;
    margin: 0 3px;
    fill: none;
    stroke: #444;
}
.field .kind {
    margin: 0 4px 0 5px;
}
.field input {
    appearance: none;
    width: 10px;
    height: 10px;
    margin: 0;
    border: 1px solid #8a8886;
    border-radius: 2px;
    background: #fafafa;
}
.scroll-thumb {
    width: 4px;
    height: 94px;
    background: #c8c6c4;
}

/* status bar */
.status {
    display: flex;
    justify-content: space-between;
    height: 14px;
    flex: none;
    padding: 3px 9px 0 0;
    line-height: 13px;
}
.zoom {
    display: flex;
    align-items: center;
    gap: 5px;
}
.zoom input {
    appearance: none;
    width: 78px;
    height: 1px;
    margin: 0;
    background: #777;
}
.zoom input::-webkit-slider-thumb {
    appearance: none;
    width: 4px;
    height: 8px;
    background: #333;
}
.zoom span {
    margin: 0 10px 0 5px;
}
```
